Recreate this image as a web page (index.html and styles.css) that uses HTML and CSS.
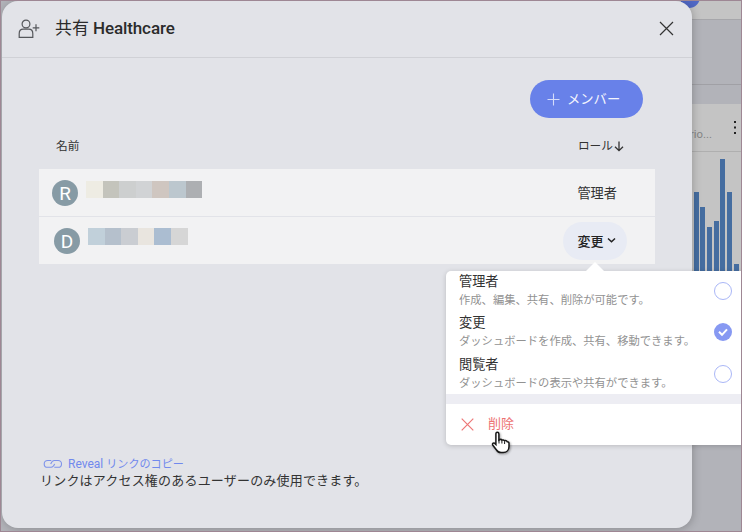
FILE: index.html
```html
<!DOCTYPE html>
<html lang="ja">
<head>
<meta charset="utf-8">
<title>共有 Healthcare</title>
<link rel="stylesheet" href="styles.css">
</head>
<body>
<div class="screen">
  <aside class="backdrop">
    <div class="topbar"><i class="blob"></i></div>
    <div class="toolbar"></div>
    <div class="gap"></div>
    <div class="card-head"><span class="card-title">rio...</span><svg class="dots" width="4" height="16" viewBox="0 0 4 16"><path d="M1 1h2v2H1zM1 6.500h2v2H1zM1 12h2v2H1z" fill="#222"/></svg></div>
    <div class="chart"><i class="b1"></i><i class="b2"></i><i class="b3"></i><i class="b4"></i><i class="b5"></i><i class="b6"></i><i class="b7"></i></div>
  </aside>

  <section class="dialog">
    <header class="dialog-head">
      <svg class="user" width="23" height="20" viewBox="0 0 23 20" fill="none" stroke="#55575b" stroke-width="1.2"><circle cx="8" cy="5" r="3.900"/><path d="M1.200 18.300v-3.600c0-2.700 1.700-4.500 4-4.500h5.600c2.300 0 4 1.800 4 4.500v3.600zM18 5.300v7M14.700 8.800h6.600"/></svg>
      <h1><span class="title-jp">共有</span> Healthcare</h1>
      <svg class="close" width="15" height="15" viewBox="0 0 15 15"><path d="M1 1l13 13M14 1L1 14" stroke="#333" stroke-width="1.2"/></svg>
    </header>
    <div class="dialog-body">
      <button class="add"><svg width="13" height="13" viewBox="0 0 13 13"><path d="M6.500 .5v12M.5 6.500h12" stroke="#d5dcfa" stroke-width="1.100"/></svg><span>メンバー</span></button>
      <div class="columns"><span>名前</span><span class="role-col">ロール<svg width="10" height="11" viewBox="0 0 10 11"><path d="M5 .5v9M1 5.700l4 4 4-4" fill="none" stroke="#333" stroke-width="1.300"/></svg></span></div>
      <div class="members">
        <div class="member">
          <span class="avatar">R</span>
          <span class="mask first"><i class="c1"></i><i class="c2"></i><i class="c3"></i><i class="c4"></i><i class="c5"></i><i class="c6"></i><i class="c7"></i></span>
          <span class="role">管理者</span>
        </div>
        <div class="member second">
          <span class="avatar">D</span>
          <span class="mask"><i class="d1"></i><i class="d2"></i><i class="d3"></i><i class="d4"></i><i class="d5"></i><i class="d6"></i></span>
          <button class="role-button">変更<svg width="9" height="7" viewBox="0 0 9 7"><path d="M1 1.500l3.500 3.300L8 1.500" fill="none" stroke="#222" stroke-width="1.500"/></svg></button>
        </div>
      </div>
    </div>
    <footer class="dialog-foot">
      <a class="link"><svg width="20" height="10" viewBox="0 0 20 10" fill="none" stroke="#7e93ea" stroke-width="1.100"><path d="M8.300 1.500H4.600a3.400 3.400 0 0 0 0 6.800h3.600c1.600 0 2.300-.7 3.500-3.400M7.700 5c1.100-2.700 1.900-3.500 3.500-3.500h3.900a3.400 3.400 0 0 1 0 6.800h-3.800"/></svg><span>Reveal <span class="link-jp">リンクのコピー</span></span></a>
      <p>リンクはアクセス権のあるユーザーのみ使用できます。</p>
    </footer>
  </section>

  <div class="popover">
    <div class="options">
      <div class="option"><div><b>管理者</b><small>作成、編集、共有、削除が可能です。</small></div><i class="radio"></i></div>
      <div class="option"><div><b>変更</b><small>ダッシュボードを作成、共有、移動できます。</small></div><i class="radio on"><svg width="18" height="18" viewBox="0 0 18 18"><path d="M5 8.800l3 3 5-5.500" fill="none" stroke="#fff" stroke-width="2"/></svg></i></div>
      <div class="option"><div><b>閲覧者</b><small>ダッシュボードの表示や共有ができます。</small></div><i class="radio"></i></div>
    </div>
    <div class="divider"></div>
    <div class="remove"><svg width="13" height="13" viewBox="0 0 13 13"><path d="M.7 .7l11.600 11.600M12.300 .7L.7 12.300" stroke="#ed7777" stroke-width="1.200"/></svg><span>削除</span></div>
  </div>

  <svg class="pointer" width="20" height="23" viewBox="0 0 20 23"><path d="M6.200 1.200c1 0 1.700.7 1.700 1.700v6.200l1-.6c1-.3 1.700.1 2 .7.900-.6 2.100-.3 2.600.5 1.100-.5 2.200 0 2.700 1 1-.1 1.800.6 1.800 1.600v3.200c0 3.400-2.300 6-5.800 6H10c-2 0-3.500-.8-4.500-2.500l-3.800-5c-.8-1.200.6-2.500 1.800-1.800l1.400 1.300V2.900c0-1 .5-1.700 1.300-1.700z" fill="#fff" stroke="#181818" stroke-width="1.500"/><path d="M8 8.500v4M10.900 9.500v3M13.600 10.300v2.700" stroke="#181818" stroke-width="1"/></svg>
</div>
</body>
</html>
```

FILE: styles.css
```css
* { box-sizing: border-box; }
body {
  margin: 0;
  font-family: Roboto, "Noto Sans CJK JP", sans-serif;
  color: #333;
}
i { display: block; }
button { border: 0; padding: 0; font-family: inherit; color: inherit; }
svg { flex: none; }

.screen {
  position: relative;
  width: 742px;
  height: 532px;
  overflow: hidden;
  border: 1px solid #9e8794;
  background: #b2b3b9;
}

.backdrop { margin-left: 680px; height: 530px; display: flex; flex-direction: column; }
.topbar { height: 18px; background: #c4c4c4; overflow: hidden; }
.blob { width: 22px; height: 22px; margin: -15px 0 0 -3px; border-radius: 50%; background: #5068c5; }
.toolbar { height: 66px; border-top: 1px solid #a6a6aa; border-bottom: 1px solid #a0a0a5; }
.gap { height: 19px; }
.card-head {
  height: 48px;
  padding: 0 4px 0 11px;
  display: flex;
  justify-content: space-between;
  background: #c4c4c4;
  border-bottom: 1px solid #afafaf;
}
.card-title { padding-top: 23px; margin-left: -2px; font-size: 11.300px; line-height: 16px; color: #858585; }
.dots { margin-top: 16px; }
.chart { height: 130px; display: flex; align-items: flex-end; gap: 1.700px; padding: 0 0 2px 12.700px; background: #c4c4c4; }
.chart i { flex: none; width: 5px; background: #456da0; }
.b1 { height: 88px; }
.b2 { height: 73px; }
.b3 { height: 53px; }
.b4 { height: 59px; }
.b5 { height: 121px; }
.b6 { height: 88px; }
.b7 { height: 16px; }

.dialog {
  position: absolute;
  left: 1px;
  top: 0;
  width: 690px;
  height: 527px;
  display: flex;
  flex-direction: column;
  border-radius: 16px;
  background: #e2e3e8;
  box-shadow: 1px 1px 8px rgba(0, 0, 0, .22);
}
.dialog-head {
  height: 57px;
  display: flex;
  align-items: center;
  padding: 0 18px 0 16px;
  border-bottom: 1px solid #d0d1d6;
}
.user { margin-top: 0; }
h1 { margin: -2px 0 0 14px; font-size: 17px; line-height: 24px; font-weight: 500; color: #2b2b2b; letter-spacing: -.1px; }
.title-jp { font-weight: 400; }
.close { margin: -1px 0 0 auto; }
.dialog-body { padding: 22px 37px 0 37px; display: flex; flex-direction: column; }
.add {
  align-self: flex-end;
  width: 113px;
  height: 38px;
  margin-right: 12px;
  padding-left: 17px;
  display: flex;
  align-items: center;
  gap: 7px;
  border-radius: 19px;
  background: #6881e9;
  color: #f4f5fd;
  font-size: 13.300px;
}
.add span { margin-top: -2px; }
.columns { height: 51px; padding: 20px 31px 0 17px; display: flex; justify-content: space-between; align-items: flex-start; font-size: 11.700px; line-height: 16px; }
.role-col { display: flex; align-items: center; gap: 1px; }
.members { width: 616px; background: #f2f2f3; }
.member { height: 48px; padding: 0 38px 0 13px; display: flex; align-items: center; border-bottom: 1px solid #e2e3e8; }
.member.second { height: 47px; padding: 0 28px 0 15px; border: 0; }
.avatar { width: 26px; height: 26px; border-radius: 50%; background: #879ba5; color: #fff; font-size: 19px; line-height: 27px; text-align: center; }
.mask { display: flex; margin: -9px auto 0 8px; }
.mask.first { margin: -6px auto 0 8px; }
.mask i { width: 16.600px; height: 17px; }
.c1 { background: #eeece3; }
.c2 { background: #c4c4bc; }
.c3 { background: #cdcfcf; }
.c4 { background: #d1d3d5; }
.c5 { background: #cfc6c0; }
.c6 { background: #bcc7ce; }
.c7 { background: #adafb2; }
.d1 { background: #c1d0da; }
.d2 { background: #b5c0cc; }
.d3 { background: #cacdd2; }
.d4 { background: #e9e5df; }
.d5 { background: #abbdd1; }
.d6 { background: #d6d6d6; }
.role { font-size: 13.200px; margin-top: -1px; }
.role-button {
  width: 64px;
  height: 38px;
  padding-left: 3px;
  display: flex;
  align-items: center;
  justify-content: center;
  gap: 3px;
  border-radius: 19px;
  background: #e8ebf4;
  font-size: 13px;
  font-weight: 500;
  color: #222;
}
.dialog-foot { margin: auto 0 0 38px; padding-bottom: 38px; }
.link { display: flex; align-items: center; gap: 5px; padding-left: 3px; height: 17px; font-size: 12px; line-height: 17px; color: #7189ed; }
.link span { margin-top: 1px; }
.link-jp { font-size: 11.100px; }
.dialog-foot p { margin: 0; font-size: 13px; line-height: 18px; letter-spacing: .19px; }

.popover {
  position: absolute;
  left: 445px;
  top: 270px;
  width: 300px;
  height: 174px;
  border-radius: 5px;
  background: #fff;
  box-shadow: 0 1px 5px rgba(0, 0, 0, .18);
}
.popover::before {
  content: "";
  position: absolute;
  left: 140px;
  top: -9px;
  border: 9px solid transparent;
  border-top: 0;
  border-bottom-color: #fff;
}
.options { height: 123px; padding: 1px 14px 0 13px; }
.option { height: 41.300px; display: flex; justify-content: space-between; }
.option b { display: block; font-size: 13.200px; line-height: 20px; font-weight: 400; }
.option small { display: block; font-size: 11.300px; line-height: 18px; color: #929292; white-space: nowrap; }
.radio { width: 18px; height: 18px; margin-top: 10px; border: 1.500px solid #aab7f7; border-radius: 50%; }
.radio.on { border: 0; background: #8799f2; }
.radio svg { display: block; }
.divider { height: 10px; background: #ededf3; }
.remove { height: 41px; padding-left: 15px; display: flex; align-items: center; gap: 14px; font-size: 13px; line-height: 18px; color: #ed7272; }
.remove span { margin-top: -2px; }
.pointer { position: absolute; left: 490px; top: 430px; filter: drop-shadow(1px 1px 1px rgba(0, 0, 0, .35)); }
```
